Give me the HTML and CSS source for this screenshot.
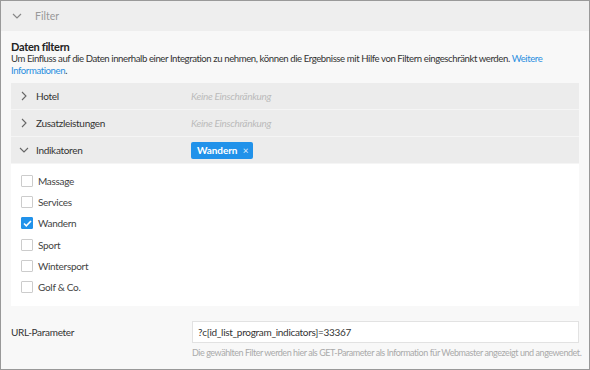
FILE: index.html
```html
<!DOCTYPE html>
<html lang="de">
<head>
    <meta charset="UTF-8" />
    <title>Filter</title>
    <link rel="stylesheet" href="styles.css">
</head>
<body>
    <div class="panel">
        <div class="panel-head">
            <svg class="chev" width="10" height="6" viewBox="0 0 10 6"><path d="M1 1l4 4 4-4" fill="none" stroke="#888" stroke-width="1.2"/></svg>
            <span>Filter</span>
        </div>
        <div class="panel-body">
            <h3>Daten filtern</h3>
            <p class="intro">Um Einfluss auf die Daten innerhalb einer Integration zu nehmen, können die Ergebnisse mit Hilfe von Filtern eingeschränkt werden. <a href="#">Weitere Informationen</a>.</p>

            <div class="acc">
                <div class="acc-row">
                    <svg class="chev" width="6" height="10" viewBox="0 0 6 10"><path d="M1 1l4 4-4 4" fill="none" stroke="#666" stroke-width="1.1"/></svg>
                    <span class="acc-label">Hotel</span>
                    <span class="acc-value">Keine Einschränkung</span>
                </div>
                <div class="acc-row">
                    <svg class="chev" width="6" height="10" viewBox="0 0 6 10"><path d="M1 1l4 4-4 4" fill="none" stroke="#666" stroke-width="1.1"/></svg>
                    <span class="acc-label">Zusatzleistungen</span>
                    <span class="acc-value">Keine Einschränkung</span>
                </div>
                <div class="acc-row">
                    <svg class="chev" width="10" height="6" viewBox="0 0 10 6"><path d="M1 1l4 4 4-4" fill="none" stroke="#666" stroke-width="1.1"/></svg>
                    <span class="acc-label">Indikatoren</span>
                    <span class="tag">Wandern <span class="x">×</span></span>
                </div>
                <div class="acc-content">
                    <label class="check"><span class="box"></span>Massage</label>
                    <label class="check"><span class="box"></span>Services</label>
                    <label class="check"><span class="box on"><svg width="9" height="7" viewBox="0 0 9 7"><path d="M1 3.5l2.3 2.3L8 1" fill="none" stroke="#fff" stroke-width="1.6"/></svg></span>Wandern</label>
                    <label class="check"><span class="box"></span>Sport</label>
                    <label class="check"><span class="box"></span>Wintersport</label>
                    <label class="check"><span class="box"></span>Golf &amp; Co.</label>
                </div>
            </div>

            <div class="field">
                <span class="field-label">URL-Parameter</span>
                <div class="field-main">
                    <div class="input">?c[id_list_program_indicators]=33367</div>
                    <div class="help">Die gewählten Filter werden hier als GET-Parameter als Information für Webmaster angezeigt und angewendet.</div>
                </div>
            </div>
        </div>
    </div>
</body>
</html>
```

FILE: styles.css
```css
body {
    margin: 0;
    font-family: Lato, "Open Sans", sans-serif;
    font-size: 10px;
    letter-spacing: -0.3px;
    background: #fff;
}
.panel {
    width: 588px;
    height: 368px;
    border: 1px solid #999;
    background: #f8f8f8;
    overflow: hidden;
}
.panel-head {
    height: 30px;
    background: #eee;
    display: flex;
    align-items: center;
    padding-left: 11px;
    font-size: 10.5px;
    letter-spacing: 0;
    color: #999;
}
.panel-head .chev {
    margin-right: 13px;
}
.panel-body {
    padding: 9px 10px 0 10px;
}
h3 {
    margin: 0;
    font-size: 11px;
    font-weight: bold;
    color: #222;
    line-height: 13px;
}
.intro {
    margin: 0 0 6px;
    font-size: 9.6px;
    letter-spacing: -0.42px;
    line-height: 12px;
    color: #333;
}
.intro a {
    color: #2a8fe0;
    text-decoration: none;
}
.acc {
    background: #fff;
}
.acc-row {
    height: 26px;
    background: #ececec;
    display: flex;
    align-items: center;
    color: #333;
    border-bottom: 1.5px solid #f5f5f5;
}
.acc-row .chev {
    width: 10px;
    margin-left: 8px;
}
.acc-label {
    width: 155px;
    margin-left: 7px;
}
.acc-value {
    color: #bbb;
    font-style: italic;
}
.tag {
    background: #2192ea;
    color: #fff;
    font-weight: bold;
    padding: 2px 5px 2px 6px;
    border-radius: 2px;
    line-height: 13px;
    letter-spacing: -0.1px;
}
.tag .x {
    font-weight: normal;
    margin-left: 3px;
    opacity: 0.85;
}
.acc-content {
    padding: 6px 10px 9px;
    height: 127px;
}
.check {
    display: flex;
    align-items: center;
    height: 21.3px;
    color: #444;
}
.box {
    width: 10px;
    height: 10px;
    border: 1px solid #ccc;
    border-radius: 1px;
    margin-right: 5px;
    display: flex;
    align-items: center;
    justify-content: center;
}
.box.on {
    background: #2192ea;
    border-color: #2192ea;
}
.field {
    display: flex;
    margin-top: 15px;
}
.field-label {
    width: 181px;
    flex-shrink: 0;
    color: #333;
    padding-top: 5px;
}
.field-main {
    flex: 1;
    min-width: 0;
}
.input {
    height: 20px;
    border: 1px solid #e2e2e2;
    background: #fff;
    padding-left: 5px;
    line-height: 20px;
    color: #333;
}
.help {
    font-size: 9px;
    letter-spacing: -0.45px;
    color: #aaa;
    margin-top: 4px;
    white-space: nowrap;
}
```
